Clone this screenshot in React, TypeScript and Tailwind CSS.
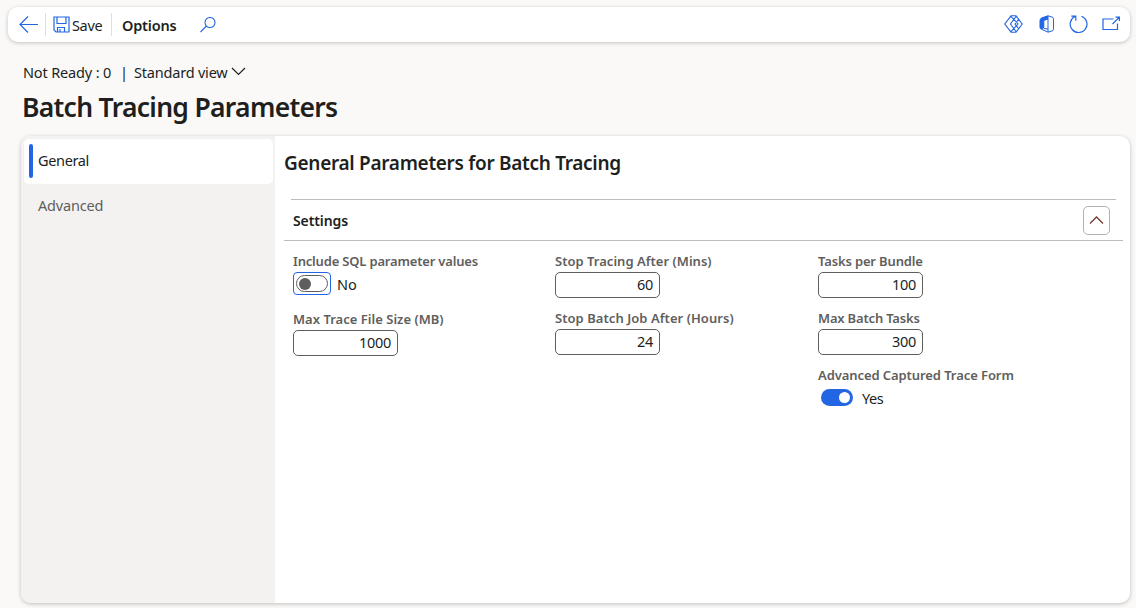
import type { ReactNode } from "react";

function Field({ label, children, track }: { label: string; children: ReactNode; track: string }) {
  return (
    <div className="h-[57px]">
      <div className={`h-5 text-[13px] leading-5 font-[570] whitespace-nowrap text-[#605e5c] ${track}`}>{label}</div>
      {children}
    </div>
  );
}

function NumberBox({ value }: { value: string }) {
  return (
    <div className="mt-px h-[26px] w-[105px] rounded-[5px] border border-[#605e5c] bg-white pr-[6px] text-right text-[14.5px] leading-[23px] tracking-[-0.3px] text-[#201f1e]">
      {value}
    </div>
  );
}

export default function App() {
  return (
    <div
      className="flex h-[608px] w-[1136px] flex-col overflow-hidden bg-[#faf9f8] text-[14.5px] text-[#201f1e]"
      style={{ fontFamily: '"Segoe UI", "Noto Sans", "Open Sans", sans-serif' }}
    >
      <header className="mt-[7px] ml-2 flex h-[35px] w-[1122px] shrink-0 items-center rounded-[10px] bg-white shadow-[0_1px_4px_rgba(0,0,0,0.22)]">
        <svg className="ml-[11px] h-[18px] w-[20px]" viewBox="0 0 20 18" fill="none" stroke="#2266e3" strokeWidth="1.2">
          <path d="M19 8.500H1.500M9 .5L1 8.500l8 8" />
        </svg>
        <div className="ml-[6px] h-[23px] w-px bg-[#e1dfdd]" />
        <svg className="ml-[7px] h-[17px] w-[17px]" viewBox="0 0 17 17" fill="none" stroke="#2266e3" strokeWidth="1.2">
          <path d="M1 1h15v15H3L1 14zM4 1v6.500h9V1M4.500 16v-4.500h7V16M7 13v3" />
        </svg>
        <span className="ml-[2px] w-[31px] pt-px leading-5 tracking-[-0.35px] whitespace-nowrap">Save</span>
        <div className="ml-[8px] h-[23px] w-px bg-[#e1dfdd]" />
        <span className="ml-[10px] w-[55px] text-[14.5px] leading-5 font-[580] tracking-[-0.2px]">Options</span>
        <svg className="ml-[23px] h-[16px] w-[16px]" viewBox="0 0 16 16" fill="none" stroke="#2266e3" strokeWidth="1.1">
          <circle cx="10" cy="5.500" r="5" />
          <path d="M6.500 9L.5 15" />
        </svg>
        <div className="mr-[10px] ml-auto flex items-center">
          <svg className="mr-[16px] mb-[2px] h-[18px] w-[19px]" viewBox="0 0 19 18" fill="none" stroke="#2266e3" strokeWidth="1.1">
            <path d="M7 .8h5L18.200 9 12 17.200H7L.8 9zM6.500 .8L14 9l-7.500 8.200M12.500 .8L6.500 9l6 8.200M14.500 4.500L11 9l3.500 4.500" />
          </svg>
          <svg className="mr-[14px] mb-[2px] h-[18px] w-[16px]" viewBox="0 0 16 18" fill="none" stroke="#2266e3" strokeWidth="1">
            <path d="M9 .8L3 2.800Q1 3.500 1 5.500v7q0 1 .9 1.500L4.800 12.700V5.500L9 4z" fill="#2266e3" />
            <path d="M9 .8l4 1.200q1.500.5 1.500 1.800v10.400q0 1.300-1.500 1.800L9 17.200L2.200 14M4.800 13.500L9 14M9 4v13" />
          </svg>
          <svg className="mr-[14px] h-[19px] w-[19px]" viewBox="0 0 19 19" fill="none" stroke="#2266e3" strokeWidth="1.2">
            <path d="M12.500 1.200a8.400 8.400 0 1 1-6.500.3M2.300 1.200H6.800v4.500" />
          </svg>
          <svg className="mb-px h-[16px] w-[18px]" viewBox="0 0 18 16" fill="none" stroke="#2266e3" strokeWidth="1.2">
            <path d="M11.500 3H1v10.500h14.500V7.500M10.500 8L17 1.500M13.500 1.100H17.400V5" />
          </svg>
        </div>
      </header>

      <div className="mt-[20px] ml-[23px] flex h-5 shrink-0 items-center leading-5 whitespace-nowrap">
        <span className="w-[97px] tracking-[-0.15px]">Not Ready : 0</span>
        <span className="w-[14px]">|</span>
        <span className="w-[97px] tracking-[-0.2px]">Standard view</span>
        <svg className="h-[10px] w-[15px]" viewBox="0 0 15 10" fill="none" stroke="#201f1e" strokeWidth="1.2">
          <path d="M1 1l6.500 6.500L14 1" />
        </svg>
      </div>
      <h1 className="mt-[7px] ml-[22px] h-9 shrink-0 text-[26.5px] leading-9 font-[560] tracking-[-0.7px] whitespace-nowrap">
        Batch Tracing Parameters
      </h1>

      <main className="mt-[11px] ml-[21px] flex h-[467px] w-[1109px] shrink-0 overflow-hidden rounded-[10px] bg-white shadow-[0_1px_4px_rgba(0,0,0,0.24)]">
        <nav className="w-[254px] shrink-0 bg-[#f3f2f1] pt-[3px] pl-[3px]">
          <div className="flex h-[45px] w-[249px] items-start rounded-[5px] bg-white pt-[5px] pl-[5px]">
            <div className="h-[34px] w-1 rounded-sm bg-[#2266e3]" />
            <span className="mt-[6px] ml-[5px] leading-5 tracking-[-0.35px]">General</span>
          </div>
          <div className="h-[45px] pt-[11px] pl-[14px] leading-5 tracking-[-0.2px] text-[#605e5c]">Advanced</div>
        </nav>
        <section className="flex-1">
          <h2 className="mt-[13px] ml-[9px] h-7 text-[19px] leading-7 font-[560] tracking-[-0.3px] whitespace-nowrap">
            General Parameters for Batch Tracing
          </h2>
          <div className="mt-[22px] mr-[14px] ml-[16px] h-px bg-[#bebbb8]" />
          <div className="mr-[7px] ml-[9px] flex h-[41px] items-start justify-between border-b border-[#bebbb8] pt-[6px] pr-[13px] pl-[9px]">
            <span className="mt-[5px] text-[14px] leading-5 font-[570] tracking-[-0.1px]">Settings</span>
            <div className="flex h-[29px] w-[27px] items-center justify-center rounded-[5px] border border-[#b3b0ad]">
              <svg className="h-[9px] w-[15px]" viewBox="0 0 15 9" fill="none" stroke="#733b2e" strokeWidth="1.3">
                <path d="M1 7.500l6.500-6.500L14 7.500" />
              </svg>
            </div>
          </div>
          <div className="mt-[10px] ml-[18px] grid grid-cols-[262px_263px_250px]">
            <div>
              <div className="h-[58px]">
                <Field label="Include SQL parameter values" track="tracking-[-0.18px]">
                  <div className="mt-px flex items-start">
                    <div className="flex h-[23px] w-[38px] items-center justify-center rounded-[4px] border border-[#2266e3]">
                      <div className="flex h-[17px] w-[32px] items-center rounded-full border border-[#605e5c] pl-[2px]">
                        <div className="h-3 w-3 rounded-full bg-[#605e5c]" />
                      </div>
                    </div>
                    <span className="ml-[6px] text-[14.5px] leading-6">No</span>
                  </div>
                </Field>
              </div>
              <Field label="Max Trace File Size (MB)" track="tracking-[0.02px]">
                <NumberBox value="1000" />
              </Field>
            </div>
            <div>
              <Field label="Stop Tracing After (Mins)" track="tracking-[0.02px]">
                <NumberBox value="60" />
              </Field>
              <Field label="Stop Batch Job After (Hours)" track="tracking-[0.05px]">
                <NumberBox value="24" />
              </Field>
            </div>
            <div>
              <Field label="Tasks per Bundle" track="tracking-[-0.15px]">
                <NumberBox value="100" />
              </Field>
              <Field label="Max Batch Tasks" track="tracking-[-0.18px]">
                <NumberBox value="300" />
              </Field>
              <Field label="Advanced Captured Trace Form" track="tracking-[-0.08px]">
                <div className="flex items-start pl-[3px]">
                  <div className="mt-[4px] flex h-[17px] w-[32px] items-center justify-end rounded-full bg-[#2266e3] pr-[3px]">
                    <div className="h-[11px] w-[11px] rounded-full bg-white" />
                  </div>
                  <span className="ml-[9px] pt-px leading-6 tracking-[-0.4px]">Yes</span>
                </div>
              </Field>
            </div>
          </div>
        </section>
      </main>
    </div>
  );
}
